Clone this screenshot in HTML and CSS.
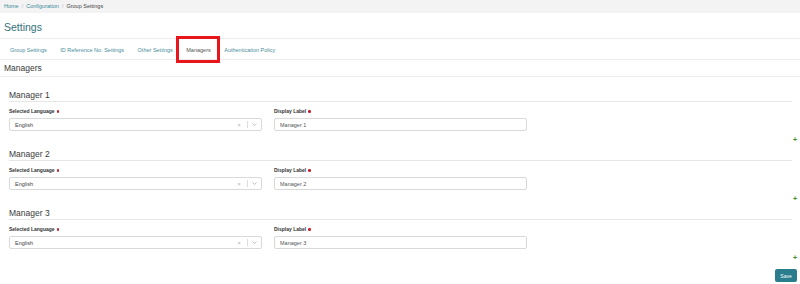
FILE: index.html
```html
<!DOCTYPE html>
<html>
<head>
<meta charset="utf-8">
<link rel="stylesheet" href="styles.css">
</head>
<body>
<div class="breadcrumb">
  <a class="crumb-link">Home</a><span class="sep">/</span><a class="crumb-link">Configuration</a><span class="sep">/</span><span class="crumb-current">Group Settings</span>
</div>
<div class="page-title">Settings</div>
<div class="tabs">
  <span class="tab">Group Settings</span>
  <span class="tab">ID Reference No. Settings</span>
  <span class="tab">Other Settings</span>
  <span class="tab active">Managers<span class="highlight"></span></span>
  <span class="tab">Authentication Policy</span>
</div>
<div class="section-title">Managers</div>
<div class="managers">
  <div class="manager">
    <div class="manager-heading">Manager 1</div>
    <div class="fields">
      <div class="field">
        <div class="label">Selected Language<span class="req"></span></div>
        <div class="select"><span class="value">English</span><span class="indicators"><span class="clear">×</span><span class="divider"></span><span class="chev"><svg width="5" height="3" viewBox="0 0 5 3"><path d="M0.5 0.5 L2.5 2.5 L4.5 0.5" fill="none" stroke="#aaa" stroke-width="0.7"/></svg></span></span></div>
      </div>
      <div class="field">
        <div class="label">Display Label<span class="req"></span></div>
        <div class="input">Manager 1</div>
      </div>
    </div>
    <div class="plus-row"><span class="plus">+</span></div>
  </div>
  <div class="manager">
    <div class="manager-heading">Manager 2</div>
    <div class="fields">
      <div class="field">
        <div class="label">Selected Language<span class="req"></span></div>
        <div class="select"><span class="value">English</span><span class="indicators"><span class="clear">×</span><span class="divider"></span><span class="chev"><svg width="5" height="3" viewBox="0 0 5 3"><path d="M0.5 0.5 L2.5 2.5 L4.5 0.5" fill="none" stroke="#aaa" stroke-width="0.7"/></svg></span></span></div>
      </div>
      <div class="field">
        <div class="label">Display Label<span class="req"></span></div>
        <div class="input">Manager 2</div>
      </div>
    </div>
    <div class="plus-row"><span class="plus">+</span></div>
  </div>
  <div class="manager">
    <div class="manager-heading">Manager 3</div>
    <div class="fields">
      <div class="field">
        <div class="label">Selected Language<span class="req"></span></div>
        <div class="select"><span class="value">English</span><span class="indicators"><span class="clear">×</span><span class="divider"></span><span class="chev"><svg width="5" height="3" viewBox="0 0 5 3"><path d="M0.5 0.5 L2.5 2.5 L4.5 0.5" fill="none" stroke="#aaa" stroke-width="0.7"/></svg></span></span></div>
      </div>
      <div class="field">
        <div class="label">Display Label<span class="req"></span></div>
        <div class="input">Manager 3</div>
      </div>
    </div>
    <div class="plus-row"><span class="plus">+</span></div>
  </div>
</div>
<div class="actions"><button class="save">Save</button></div>
</body>
</html>
```
FILE: styles.css
```css
* { box-sizing: border-box; }
html, body { margin: 0; padding: 0; background: #fff; }
body { font-family: "Liberation Sans", Arial, sans-serif; color: #333; width: 800px; height: 284px; overflow: hidden; }

.breadcrumb {
  height: 13px; line-height: 13px; background: #f3f3f3;
  font-size: 5.5px; padding-left: 4px;
}
.crumb-link { color: #3b8c9c; }
.sep { color: #bbb; margin: 0 3px; }
.crumb-current { color: #444; }

.page-title {
  height: 26px; padding-top: 4px; line-height: 21px;
  font-size: 10.5px; color: #336f7c; padding-left: 4px;
  border-bottom: 1px solid #ececec;
}

.tabs {
  height: 21px; display: flex; align-items: center; gap: 13.5px;
  padding-left: 10px; padding-top: 1px;
  border-bottom: 1px solid #ececec;
  font-size: 5.5px;
}
.tab { color: #4a8e9c; position: relative; }
.tab.active { color: #555; }
.highlight {
  position: absolute; left: -10px; right: -9px; top: -11px; height: 27px;
  border: 3px solid #e8151d;
}

.section-title {
  height: 17px; line-height: 17px; font-size: 8.5px; color: #3a3a3a;
  padding-left: 4px; border-bottom: 1px solid #ececec;
}

.managers { padding: 10px 3px 0 9px; }
.manager-heading {
  margin-right: 5px; padding-top: 3px; padding-bottom: 1px;
  line-height: 10px; font-size: 8.5px; color: #3a3a3a;
  border-bottom: 1px solid #e6e6e6;
}
.fields {
  display: grid; grid-template-columns: 253px 253px 253px; column-gap: 12px;
}
.label {
  margin-top: 5px; line-height: 8px; font-size: 5px; font-weight: bold; color: #333;
  display: flex; align-items: center;
}
.req {
  display: inline-block; width: 2.5px; height: 2.5px; border-radius: 50%;
  background: #c8202a; margin-left: 2px; margin-top: 1px;
}
.select, .input {
  margin-top: 3px; height: 13px; border: 1px solid #d9d9d9; border-radius: 2px;
  background: #fff; font-size: 5.5px; color: #444;
  display: flex; align-items: center; padding-left: 5px;
}
.select .value { flex: 1; }
.indicators { display: flex; align-items: center; height: 100%; }
.clear { color: #b5b5b5; font-size: 6px; width: 16px; text-align: center; }
.divider { width: 1px; height: 7px; background: #ddd; }
.chev { width: 13px; display: flex; justify-content: center; }
.input { color: #555; }

.plus-row { height: 15px; display: flex; justify-content: flex-end; align-items: center; padding-top: 1px; }
.plus { color: #3f8a1c; font-size: 7px; font-weight: bold; line-height: 7px; }

.actions { display: flex; justify-content: flex-end; padding: 5px 3px 0 0; }
.save {
  width: 22px; height: 13px; padding: 0; border: none; border-radius: 2px;
  background: #2a7d8c; color: #fff; font-family: "Liberation Sans", Arial, sans-serif;
  font-size: 5px;
}
```
